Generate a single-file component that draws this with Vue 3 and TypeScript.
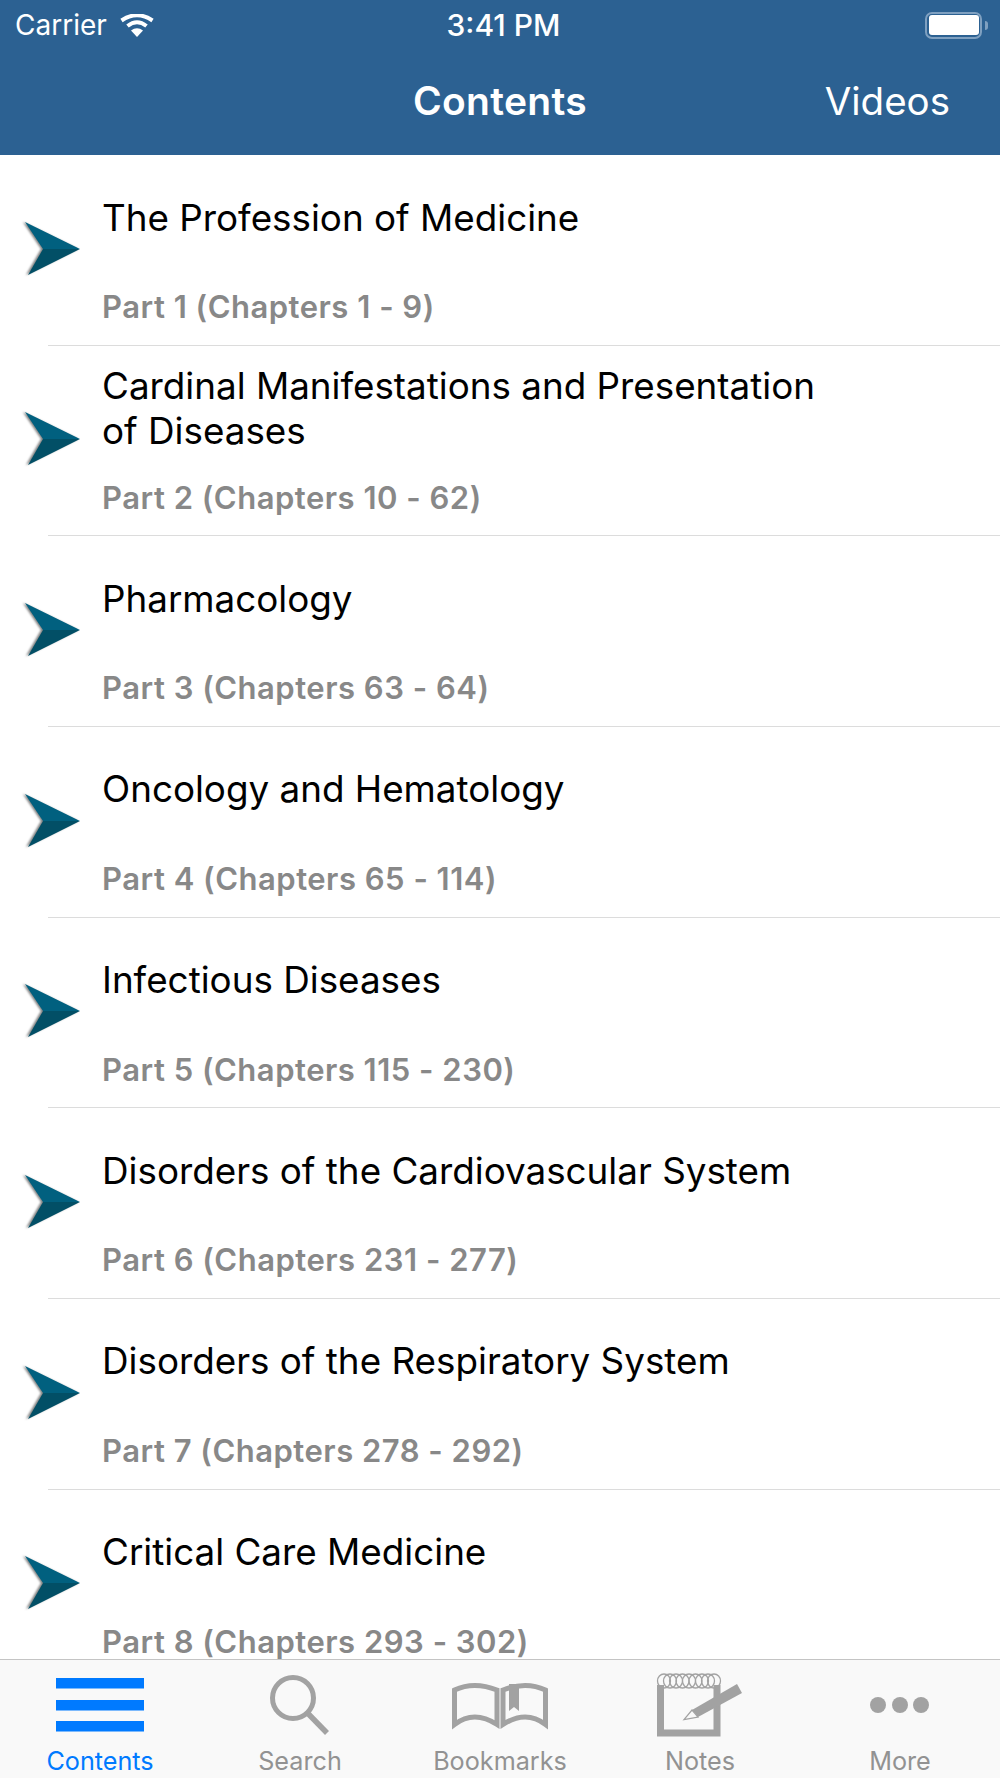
<script setup lang="ts">
interface Part { title: string; sub: string }
const parts: Part[] = [
  { title: 'The Profession of Medicine', sub: 'Part 1 (Chapters 1 - 9)' },
  { title: 'Cardinal Manifestations and Presentation of Diseases', sub: 'Part 2 (Chapters 10 - 62)' },
  { title: 'Pharmacology', sub: 'Part 3 (Chapters 63 - 64)' },
  { title: 'Oncology and Hematology', sub: 'Part 4 (Chapters 65 - 114)' },
  { title: 'Infectious Diseases', sub: 'Part 5 (Chapters 115 - 230)' },
  { title: 'Disorders of the Cardiovascular System', sub: 'Part 6 (Chapters 231 - 277)' },
  { title: 'Disorders of the Respiratory System', sub: 'Part 7 (Chapters 278 - 292)' },
  { title: 'Critical Care Medicine', sub: 'Part 8 (Chapters 293 - 302)' }
]
const loops = [9, 15, 21, 27.5, 34, 40.5, 47, 53, 59]
</script>

<template>
  <div class="page">
    <header class="head">
      <div class="status">
        <div class="status-left">
          <span>Carrier</span>
          <svg class="wifi" width="34" height="24" viewBox="0 0 34 24">
            <path d="M17 23 L11 16.5 Q17 12 23 16.5 Z" fill="#fff" />
            <path d="M7.5 12 Q17 4.5 26.5 12" fill="none" stroke="#fff" stroke-width="4" />
            <path d="M1.5 6.5 Q17 -4 32.5 6.5" fill="none" stroke="#fff" stroke-width="4" />
          </svg>
        </div>
        <span class="time">3:41 PM</span>
        <div class="battery">
          <div class="battery-shell"><div class="battery-fill"></div></div>
          <div class="battery-nub"></div>
        </div>
      </div>
      <div class="nav">
        <span class="nav-title">Contents</span>
        <span class="nav-action">Videos</span>
      </div>
    </header>

    <main class="list">
      <div v-for="p in parts" :key="p.sub" class="row">
        <svg class="arrow" width="60" height="56" viewBox="0 0 60 56">
          <path d="M2 1 L57 28 L20 28 Z" fill="#01607f" />
          <path d="M20 28 L57 28 L5 54 Z" fill="#024f66" />
        </svg>
        <div class="text">
          <div class="title-box"><div class="title">{{ p.title }}</div></div>
          <div class="sub">{{ p.sub }}</div>
        </div>
      </div>
    </main>

    <footer class="tabs">
      <div class="tab active">
        <svg width="88" height="68" viewBox="0 0 88 68">
          <rect x="0" y="6" width="88" height="10.5" fill="#007aff" />
          <rect x="0" y="28" width="88" height="10.5" fill="#007aff" />
          <rect x="0" y="49" width="88" height="10.5" fill="#007aff" />
        </svg>
        <span>Contents</span>
      </div>
      <div class="tab">
        <svg width="80" height="68" viewBox="0 0 80 68">
          <circle cx="33" cy="26" r="20.5" fill="none" stroke="#a2a2a2" stroke-width="5" />
          <path d="M47.5 41 L67 61" stroke="#a2a2a2" stroke-width="5.5" />
        </svg>
        <span>Search</span>
      </div>
      <div class="tab">
        <svg width="100" height="68" viewBox="0 0 100 68">
          <path d="M4.5 18 Q24 9 47 18 L47 52.5 Q24 37.5 4.5 52.5 Z" fill="none" stroke="#a2a2a2" stroke-width="5" />
          <path d="M53 18 Q76 9 95.5 18 L95.5 52.5 Q76 37.5 53 52.5 Z" fill="none" stroke="#a2a2a2" stroke-width="5" />
          <path d="M59 12 L69 12 L69 39 L64 35 L59 39 Z" fill="#a2a2a2" />
        </svg>
        <span>Bookmarks</span>
      </div>
      <div class="tab">
        <svg width="90" height="68" viewBox="0 0 90 68">
          <path d="M5.5 13 L5.5 61 L62 61 L62 13" fill="none" stroke="#a2a2a2" stroke-width="7" />
          <ellipse v-for="x in loops" :key="x" :cx="x" cy="9" rx="6.5" ry="7" fill="none" stroke="#a2a2a2" stroke-width="1.3" />
          <path d="M82 12 L87 21 L43 45 L37 38 Z" fill="#a2a2a2" />
          <path d="M37 38 L43 45 L29 47.5 Z" fill="#f9f9f9" stroke="#a2a2a2" stroke-width="1.2" />
        </svg>
        <span>Notes</span>
      </div>
      <div class="tab">
        <svg width="60" height="68" viewBox="0 0 60 68">
          <circle cx="8" cy="33" r="8" fill="#a2a2a2" />
          <circle cx="30" cy="33" r="8" fill="#a2a2a2" />
          <circle cx="51" cy="33" r="8" fill="#a2a2a2" />
        </svg>
        <span>More</span>
      </div>
    </footer>
  </div>
</template>

<style>
html, body { margin: 0; background: #fff; }
</style>

<style scoped>
.page {
  width: 1000px;
  height: 1778px;
  display: flex;
  flex-direction: column;
  overflow: hidden;
  font-family: Inter, "Noto Sans", sans-serif;
  background: #fff;
}
.head {
  height: 155px;
  flex: none;
  background: #2c6192;
  color: #fff;
  display: flex;
  flex-direction: column;
}
.status {
  height: 50px;
  padding: 0 12px 0 15px;
  display: grid;
  grid-template-columns: 1fr auto 1fr;
  align-items: center;
  font-size: 28px;
}
.status-left { display: flex; align-items: center; gap: 13px; }
.wifi { margin-top: 1px; }
.time { font-size: 30px; font-weight: 500; margin-left: 4px; }
.battery { display: flex; align-items: center; justify-content: flex-end; gap: 3px; }
.battery-shell {
  width: 57px;
  height: 27px;
  box-sizing: border-box;
  border: 2.5px solid #7fa0c0;
  border-radius: 7px;
  padding: 1.5px;
}
.battery-fill { height: 100%; background: #fff; border-radius: 3px; }
.battery-nub { width: 3px; height: 9px; background: #7fa0c0; border-radius: 0 3px 3px 0; }
.nav {
  height: 105px;
  position: relative;
  display: flex;
  align-items: flex-start;
  justify-content: center;
  padding-top: 29px;
  box-sizing: border-box;
  line-height: 44px;
}
.nav-title { font-size: 39px; font-weight: 600; letter-spacing: 0.3px; }
.nav-action { position: absolute; right: 50px; top: 29px; font-size: 38.5px; }
.list { flex: 1; min-height: 0; overflow: hidden; }
.row {
  height: 190.67px;
  box-sizing: border-box;
  margin-left: 48px;
  border-bottom: 1.5px solid #dcdcdc;
  display: flex;
  align-items: center;
}
.arrow {
  margin-left: -25px;
  margin-top: -2px;
  flex: none;
  filter: drop-shadow(-1.5px 0 1px rgba(0, 0, 0, 0.5));
}
.text { margin-left: 19px; width: 780px; align-self: flex-start; }
.title-box { height: 124px; display: flex; align-items: center; }
.title { font-size: 36.8px; line-height: 45px; color: #000; max-width: 740px; }
.sub { font-size: 31px; letter-spacing: 0.5px; line-height: 40px; font-weight: 600; color: #888; margin-top: 8px; }
.tabs {
  height: 119px;
  flex: none;
  background: #f9f9f9;
  border-top: 1.5px solid #c4c4c4;
  box-sizing: border-box;
  display: grid;
  grid-template-columns: repeat(5, 1fr);
  padding-top: 12px;
}
.tab {
  display: flex;
  flex-direction: column;
  align-items: center;
  color: #929292;
  font-size: 25.2px;
  line-height: 30px;
}
.tab svg { flex: none; }
.tab span { margin-top: 6px; }
.tab.active { color: #007aff; }
</style>
